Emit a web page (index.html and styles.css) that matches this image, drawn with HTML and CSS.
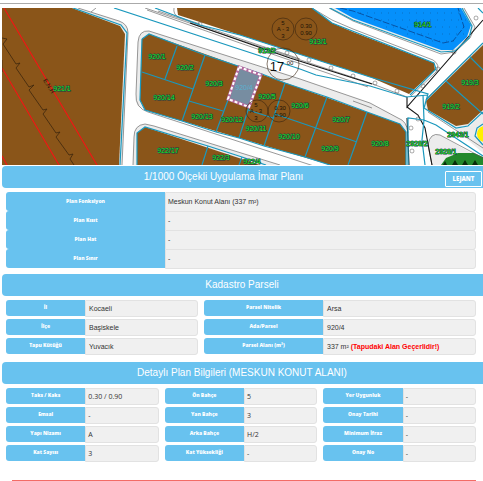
FILE: index.html
```html
<!DOCTYPE html>
<html lang="tr">
<head>
<meta charset="utf-8">
<meta name="viewport" content="width=device-width, initial-scale=1">
<title>1/1000 Ölçekli Uygulama İmar Planı</title>
<link rel="stylesheet" href="styles.css">
</head>
<body>
<main class="page">
  <svg class="map" viewBox="2 8 481 157" role="img" aria-label="İmar planı haritası">
    <rect x="2" y="8" width="481" height="157" fill="#fff"/>

    <g class="verge">
      <path d="M70 8H78L119 21Q128 24 128 33L122 165H117L123 33 119 27Z"/>
      <path d="M138 42Q139 30 149 31L300 79 370 103 398 118Q407 121 408 133V165H404L400 127 149 38 143 45 143 100 148 111 139 107Q135 103 136 96Z"/>
      <path d="M133 165L134 138Q134 125 145 124L154 126 280 165H255L148 130 139 136V165Z"/>
      <path d="M424 102L470 56 483 43V110L468 126 456 128 426 111Z"/>
      <path d="M332 8L353 19 441 52 455 52 470 37 474 26 464 8Z"/>
      <path d="M432 165L428 145Q430 132 440 135L483 160V165Z"/>
      <path d="M455 129L470 126 483 111V153Z"/>
    </g>

    <g class="brown">
      <path d="M2 8H72L120 26 125 34 119 165H2Z"/>
      <path d="M142 39L149 34 367 112 400 124 406 132V165H330L145 110 140 100Z"/>
      <path d="M137 165V133L145 127 260 165Z"/>
      <path d="M177 8L178 15 240 35 370 77 409 94 435 70 434 63 353 32 332 23 312 8Z"/>
      <path d="M426 101L483 45V110L468 124 456 126 428 110Z"/>
    </g>

    <path d="M335 8L353 18 441 50 453 50 467 37 471 25 461 8Z" fill="#0590fb"/>
    <g class="dots">
      <path d="M360 13H460M374 20H468M386 27H468M407 34H466M425 41H458"/>
    </g>
    <path d="M340 8L353 11 443 43 453 41 464 27 458 8" class="dashed"/>
    <path d="M441 165L446 158 458 153H474L483 157V165Z" fill="#22882b"/>
    <path d="M443 165l2-4 2 4zM452 165l3-5 3 5zM462 165l3-5 3 5zM472 165l3-5 3 5z" fill="#092b0b"/>
    <circle cx="485" cy="134" r="8" fill="#fff000"/>

    <g class="road-line">
      <path d="M78 8L119 21Q128 24 128 33L122 165M91 12l5-4M133 165L134 137Q134 125 145 124L154 126 280 165"/>
      <path d="M148 112Q135 108 136 94L138 42Q139 30 149 31L300 79 370 103 398 118Q407 121 408 133M148 112L320 168"/>
      <path d="M145 8L240 40 370 83 407 97M147 10L240 43 368 87M158 11L300 59M312 8L332 20 353 29 433 60Q441 65 436 72L411 96M174 8Q173 14 178 17L200 24"/>
      <path d="M329 8L353 21 441 54 455 52 470 38 475 27 464 8M353 101L372 108"/>
      <path d="M432 165L428 145Q430 132 440 135L483 158M428 112L483 148"/>
      <path d="M426 99L483 43"/>
    </g>
    <g class="road-bold">
      <path d="M190 23L290 58 372 84M407 97V107L483 20M407 107L418 115 425 128 432 165M407 118L409 165"/>
    </g>
    <g class="node">
      <circle cx="287" cy="53" r="2"/><circle cx="309" cy="60" r="2"/><circle cx="331" cy="68" r="2"/><circle cx="353" cy="76" r="2"/><circle cx="375" cy="83" r="2"/><circle cx="397" cy="91" r="2"/><circle cx="423" cy="86" r="2"/><circle cx="438" cy="69" r="2"/><circle cx="454" cy="52" r="2"/><circle cx="476" cy="18" r="2"/><circle cx="418" cy="119" r="2"/><circle cx="411" cy="128" r="2"/><circle cx="412" cy="151" r="2"/><circle cx="200" cy="24" r="2"/>
    </g>

    <g class="parcel-line">
      <path d="M73 8L121 25 127 33 120 165"/>
      <path d="M142 39L149 34 178 45 205 55 238 66 262 74 285 83 327 97 367 112 400 124 406 132V165M142 39L140 100 145 110 182 121 216 132 239 138 264 146 305 157 330 165"/>
      <path d="M142 72L193 89M177 46L165 79M205 55L182 121M189 101L223 111M228 100L216 132M249 107L239 138M248 110L273 118M285 83L264 146M275 114L357 142M327 97L305 157M367 112L348 165"/>
      <path d="M137 165V133L145 127 208 146 242 157 266 165M208 146L202 165M242 157L239 165"/>
      <path d="M114 8L300 69 316 75 370 86 406 97 428 95M155 8L200 25 240 35 370 77 428 94 424 108 456 128 468 126 483 112M312 8L332 23 434 63 436 69 410 95"/>
      <path d="M330 8L353 20 441 52 455 51 469 38 472 26 462 8M426 100L483 43M470 57L483 70M446 81L483 114"/>
      <path d="M408 165V118L424 120 436 125 483 156M423 95L424 120 422 140 425 165M483 124L477 128 475 136 483 145M478 8L483 13"/>
    </g>

    <g class="border-red">
      <path d="M4 8L97 165M2 68L59 165M2 156L7 165"/>
    </g>
    <path class="zigzag" d="M2 38l5 1-4 5 13 20 4-1-4 5 13 19 5-2-5 5 14 20 4-1-4 5 13 19 4-1-4 5 13 18 4-1-3 5 8 12M2 60v12"/>

    <path d="M239 67L261 75 249 107 228 99Z" class="selected"/>
    <path d="M239 67L261 75 249 107 228 99Z" class="selected-dash"/>

    <g class="plan-mark">
      <circle cx="283" cy="29" r="11"/><circle cx="306" cy="29" r="11"/>
      <circle cx="257" cy="111" r="11"/><circle cx="279" cy="111" r="11"/>
      <circle cx="283" cy="64" r="16"/>
    </g>
    <g class="plan-text">
      <text x="283" y="25">5</text><text x="283" y="31">A - 3</text><text x="283" y="38">3</text>
      <text x="306" y="28">0.30</text><text x="306" y="35">0.90</text>
      <text x="256" y="107">5</text><text x="256" y="113">A - 3</text><text x="256" y="120">3</text>
      <text x="280" y="110">0.30</text><text x="280" y="117">0.90</text>
      <text x="290" y="65">00</text>
      <text x="49" y="88" transform="rotate(58 49 86)">E.N.H</text>
    </g>
    <text class="road-width" x="277" y="71">17</text>

    <g class="parcel-name">
      <text x="62" y="91">921/1</text><text x="157" y="59">920/1</text><text x="185" y="70">920/2</text>
      <text x="214" y="86">920/3</text><text x="164" y="100">920/14</text><text x="202" y="119">920/13</text>
      <text x="232" y="122">920/12</text><text x="267" y="99">920/5</text><text x="256" y="131">920/11</text>
      <text x="300" y="108">920/6</text><text x="289" y="139">920/10</text><text x="341" y="122">920/7</text>
      <text x="330" y="151">920/9</text><text x="380" y="146">920/8</text><text x="168" y="153">922/17</text>
      <text x="221" y="160">922/3</text><text x="252" y="164">922/4</text><text x="267" y="53">913/2</text>
      <text x="318" y="44">913/1</text><text x="423" y="27">914/1</text><text x="470" y="85">919/3</text>
      <text x="451" y="109">919/2</text><text x="458" y="137">2943/1</text><text x="417" y="146">2928/2</text>
      <text x="446" y="154">2928/1</text>
    </g>
    <text class="selected-name" x="244" y="90">920/4</text>
  </svg>

  <section>
    <header class="bar">
      <h2>1/1000 Ölçekli Uygulama İmar Planı</h2>
      <button class="legend" type="button">LEJANT</button>
    </header>
    <dl class="fields plan">
      <div class="field"><dt>Plan Fonksiyon</dt><dd>Meskun Konut Alanı (337 m²)</dd></div>
      <div class="field"><dt>Plan Kısıt</dt><dd>-</dd></div>
      <div class="field"><dt>Plan Hat</dt><dd>-</dd></div>
      <div class="field"><dt>Plan Sınır</dt><dd>-</dd></div>
    </dl>
  </section>

  <section>
    <header class="bar"><h2>Kadastro Parseli</h2></header>
    <dl class="fields cadastre">
      <div class="field"><dt>İl</dt><dd>Kocaeli</dd></div>
      <div class="field wide"><dt>Parsel Nitelik</dt><dd>Arsa</dd></div>
      <div class="field"><dt>İlçe</dt><dd>Başiskele</dd></div>
      <div class="field wide"><dt>Ada/Parsel</dt><dd>920/4</dd></div>
      <div class="field"><dt>Tapu Kütüğü</dt><dd>Yuvacık</dd></div>
      <div class="field wide"><dt>Parsel Alanı (m²)</dt><dd>337 m² <strong>(Tapudaki Alan Geçerlidir!)</strong></dd></div>
    </dl>
  </section>

  <section>
    <header class="bar"><h2>Detaylı Plan Bilgileri (MESKUN KONUT ALANI)</h2></header>
    <dl class="fields detail">
      <div class="field"><dt>Taks / Kaks</dt><dd>0.30 / 0.90</dd></div>
      <div class="field"><dt>Ön Bahçe</dt><dd>5</dd></div>
      <div class="field"><dt>Yer Uygunluk</dt><dd>-</dd></div>
      <div class="field"><dt>Emsal</dt><dd>-</dd></div>
      <div class="field"><dt>Yan Bahçe</dt><dd>3</dd></div>
      <div class="field"><dt>Onay Tarihi</dt><dd>-</dd></div>
      <div class="field"><dt>Yapı Nizamı</dt><dd>A</dd></div>
      <div class="field"><dt>Arka Bahçe</dt><dd>H/2</dd></div>
      <div class="field"><dt>Minimum İfraz</dt><dd>-</dd></div>
      <div class="field"><dt>Kat Sayısı</dt><dd>3</dd></div>
      <div class="field"><dt>Kat Yüksekliği</dt><dd>-</dd></div>
      <div class="field"><dt>Onay No</dt><dd>-</dd></div>
    </dl>
  </section>
  <hr class="rule">
</main>
</body>
</html>
```

FILE: styles.css
```css
* { box-sizing: border-box; }

body {
  margin: 0;
  background: #fff;
  color: #333;
  font-family: "Liberation Sans", Arial, sans-serif;
  font-size: 7px;
}

.page {
  margin-top: 3px;
  border-top: 1px solid #aaa;
  padding: 4px 0 0 2px;
}

.map {
  display: block;
  width: 100%;
  margin-bottom: 1px;
}

.bar {
  display: flex;
  align-items: center;
  height: 22px;
  padding-right: 1px;
  border-radius: 4px 0 0 4px;
  background: #68c2ef;
  color: #fff;
}

.bar h2 {
  flex: 1;
  margin: 0;
  font-size: 10px;
  font-weight: 400;
  line-height: 22px;
  text-align: center;
}

.legend {
  width: 37px;
  height: 16px;
  margin-top: 4px;
  padding: 0;
  border: 1px solid #fff;
  border-radius: 1px;
  background: transparent;
  color: #fff;
  font: 800 6px/14px "Open Sans", sans-serif;
}

.fields {
  display: grid;
  gap: 3px 6px;
  margin: 0;
  padding: 4px 7px 8px 4px;
}

.field {
  display: grid;
  grid-template-columns: 79fr 73fr;
  height: 16px;
  line-height: 15px;
}

dt {
  margin-bottom: 1px;
  border-radius: 3px 0 0 3px;
  background: #68c2ef;
  color: #fff;
  font-family: "Open Sans", sans-serif;
  font-size: 5px;
  font-weight: 800;
  text-align: center;
}

dd {
  margin: 0;
  padding-left: 3px;
  border: 1px solid #e2e2e2;
  border-radius: 0 3px 3px 0;
  background: #f0f0f0;
}

dd strong { color: #f00; }

.plan {
  row-gap: 0;
  padding-bottom: 6px;
}

.plan .field {
  grid-template-columns: 159fr 311fr;
  height: 19px;
  line-height: 18px;
}

.plan dd { padding-left: 2px; }

.cadastre { grid-template-columns: 192fr 272fr; }
.cadastre .field { grid-template-columns: 79fr 113fr; }
.cadastre .wide { grid-template-columns: 119fr 153fr; }

.detail {
  grid-template-columns: repeat(3, 1fr);
  padding-bottom: 0;
}

.detail dd {
  padding-left: 2px;
  font-family: "Open Sans", sans-serif;
}

.rule {
  height: 1px;
  margin: 19px 7px 0 10px;
  border: 0;
  background: #f36c66;
}

.verge { fill: #ececec; }
.brown { fill: #8a5519; }

.dots {
  fill: none;
  stroke: #0b70c4;
  stroke-dasharray: 1 6;
}

.dashed {
  fill: none;
  stroke: #083a80;
  stroke-dasharray: 7 2;
  stroke-width: .7;
}

.road-line {
  fill: none;
  stroke: #555;
  stroke-width: .6;
}

.road-bold {
  fill: none;
  stroke: #151515;
  stroke-width: 1.1;
}

.node {
  fill: none;
  stroke: #555;
  stroke-width: .5;
}

.parcel-line {
  fill: none;
  stroke: #1a98bd;
  stroke-width: 1.2;
}

.border-red {
  fill: none;
  stroke: #f51414;
  stroke-width: 1.1;
}

.zigzag {
  fill: none;
  stroke: #3c260d;
  stroke-width: .8;
}

.selected {
  fill: #778da1;
  stroke: #b56a9e;
  stroke-width: 3;
}

.selected-dash {
  fill: none;
  stroke: #fff;
  stroke-width: 2;
  stroke-dasharray: 3 2;
}

.plan-mark {
  fill: none;
  stroke: #38240f;
  stroke-width: .6;
}

.plan-text {
  fill: #1b1207;
  font-size: 6px;
  text-anchor: middle;
}

.road-width {
  fill: #111;
  font-size: 13px;
  text-anchor: middle;
}

.parcel-name {
  fill: #28f018;
  stroke: #123c48;
  stroke-width: 1;
  paint-order: stroke;
  font-size: 7px;
  text-anchor: middle;
}

.selected-name {
  fill: #5cb0cf;
  font-size: 7px;
  text-anchor: middle;
}
```
